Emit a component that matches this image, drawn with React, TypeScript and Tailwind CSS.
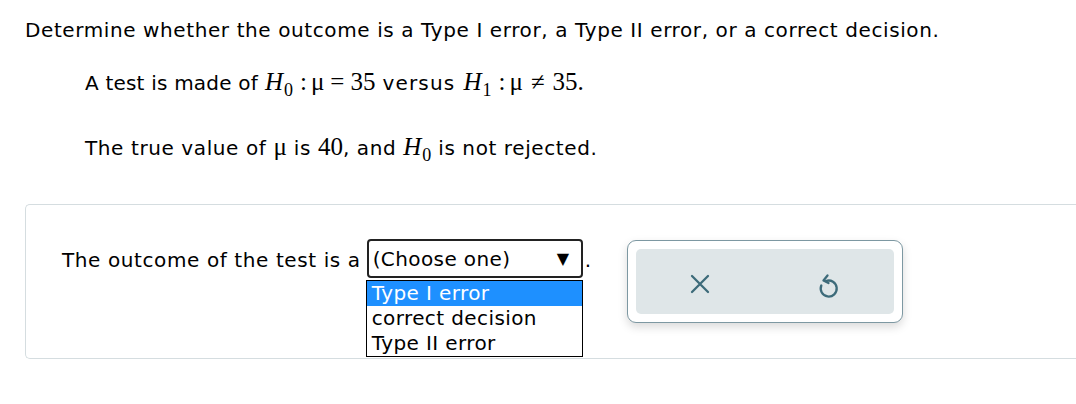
const sans = { fontFamily: '"DejaVu Sans", Verdana, sans-serif', letterSpacing: "0.6px" };

const serif = "font-['Liberation_Serif',serif] text-[25px] tracking-normal";

function H({ sub, extra = "" }: { sub: string; extra?: string }) {
  return (
    <span className={`${serif} ${extra}`}>
      <i>H</i>
      <span className="text-[18px] relative top-[6px] ml-[1px]">{sub}</span>
    </span>
  );
}

function Hyp({ rel, gap }: { rel: string; gap: string }) {
  return (
    <span className={serif}>
      <span className="ml-[7px] mr-[4px]">:</span>
      <span>μ</span>
      <span className={gap}>{rel}</span>
      <span>35</span>
    </span>
  );
}

function CloseIcon() {
  return (
    <svg width="22" height="22" viewBox="0 0 22 22" fill="none" stroke="#3d6b7a" strokeWidth="2.3" strokeLinecap="round">
      <path d="M3 3 L19 19 M19 3 L3 19" />
    </svg>
  );
}

function UndoIcon() {
  return (
    <svg width="24" height="28" viewBox="0 0 24 28" fill="none" stroke="#3d6b7a" strokeWidth="2.3" strokeLinecap="round" strokeLinejoin="round">
      <path d="M9 9 A8 8 0 1 1 4.3 13.5" />
      <path d="M10.5 3.5 L6.5 8.5 L11.5 11" />
    </svg>
  );
}

export default function App() {
  return (
    <div className="w-[1076px] h-[404px] bg-white overflow-hidden text-black" style={sans}>
      <div className="pl-[25px] pt-[17px]">
        <p className="text-[20px] leading-[26px]">
          Determine whether the outcome is a Type I error, a Type II error, or a correct decision.
        </p>
        <p className="pl-[60px] mt-[26px] text-[20px] leading-[26px]">
          <span className="tracking-[0.2px]">A test is made of</span> <H sub="0" />
          <Hyp rel="=" gap="mx-[6px]" /> <span className="tracking-[1.2px]">versus</span> <H sub="1" extra="ml-[1px]" />
          <Hyp rel="≠" gap="mx-[8px]" />
          <span className={serif}>.</span>
        </p>
        <p className="pl-[60px] mt-[37px] text-[20px] leading-[26px]">
          The true value of <span className={serif}>μ</span> is <span className={serif}>40</span>, and <H sub="0" /> is not rejected.
        </p>
      </div>

      {/* answer box */}
      <div className="ml-[25px] mt-[42px] h-[155px] border border-[#d5dde0] rounded-[5px] border-r-0 rounded-r-none">
        <div className="flex items-start pl-[36px] pt-[34px]">
          <div className="flex items-start text-[20px]">
            <span className="mt-[6px] mr-[6px]">The outcome of the test is a</span>
            <div className="flex flex-col">
              <div className="w-[216px] h-[39px] border-2 border-[#222] rounded-[4px] flex items-center justify-between pl-[4px] pr-[11px]">
                <span className="text-[20px] tracking-[0.4px]">(Choose one)</span>
                <span className="text-[16px]">▼</span>
              </div>
              <div className="w-[217px] mt-[2px] border border-black text-[20px] tracking-[0.4px] leading-[25px] -ml-px">
                <div className="bg-[#1e90ff] text-white pl-[5px]">Type I error</div>
                <div className="pl-[5px]">correct decision</div>
                <div className="pl-[5px]">Type II error</div>
              </div>
            </div>
            <span className="mt-[6px] ml-[2px]">.</span>
          </div>

          <div className="ml-[35px] mt-[1px] w-[276px] h-[83px] border border-[#7d98a2] rounded-[9px] bg-white p-[8px] shadow-[0_4px_10px_rgba(0,0,0,0.15)]">
            <div className="h-full bg-[#dfe6e8] rounded-[5px] flex items-center justify-center gap-[106px]">
              <div className="mt-[5px]"><CloseIcon /></div>
              <div className="mt-[8px]"><UndoIcon /></div>
            </div>
          </div>
        </div>
      </div>
    </div>
  );
}
